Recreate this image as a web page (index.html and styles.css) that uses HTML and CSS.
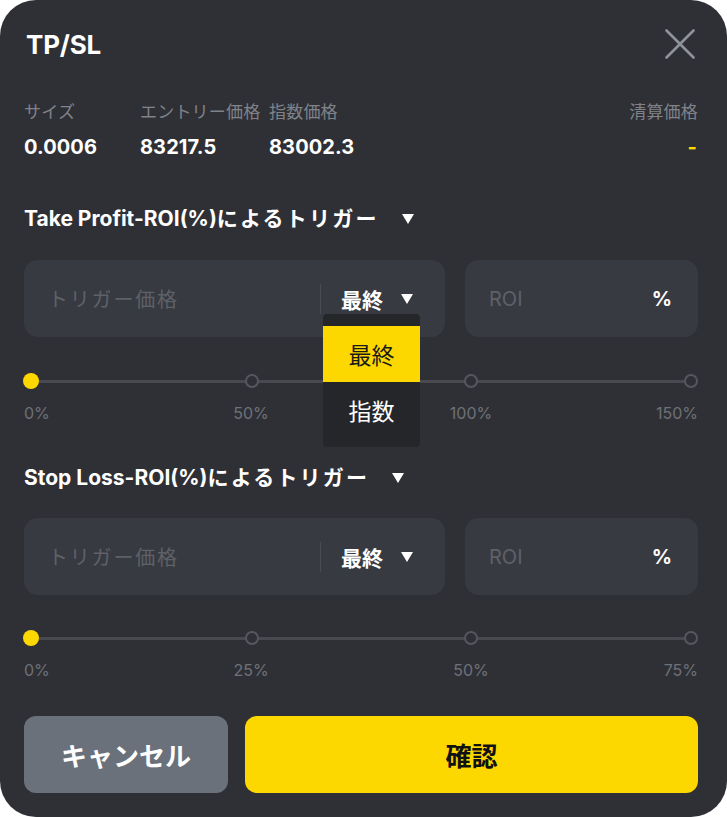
FILE: index.html
```html
<!DOCTYPE html>
<html lang="ja">
<head>
<meta charset="utf-8">
<title>TP/SL</title>
<link rel="stylesheet" href="styles.css">
</head>
<body>
<div class="modal">
  <div class="header">
    <div class="title">TP/SL</div>
    <svg class="close" width="30" height="30" viewBox="0 0 30 30"><path d="M1.5 1.5 L28.5 28.5 M28.5 1.5 L1.5 28.5" stroke="#8e939c" stroke-width="2.6" stroke-linecap="round" fill="none"/></svg>
  </div>

  <div class="info">
    <div class="lbl">サイズ</div>
    <div class="lbl">エントリー価格</div>
    <div class="lbl">指数価格</div>
    <div class="lbl right">清算価格</div>
    <div class="val">0.0006</div>
    <div class="val">83217.5</div>
    <div class="val">83002.3</div>
    <div class="val right yellow">-</div>
  </div>

  <div class="section-title first"><span>Take Profit-ROI(%)</span><span class="jp">によるトリガー</span><svg class="caret" width="12" height="10" viewBox="0 0 12 10"><path d="M0 0 H12 L6 10 Z" fill="#fff"/></svg></div>

  <div class="inputs">
    <div class="box price">
      <span class="ph grow">トリガー価格</span>
      <span class="divider"></span>
      <span class="sel">最終 <svg class="caret" width="12" height="10" viewBox="0 0 12 10"><path d="M0 0 H12 L6 10 Z" fill="#fff"/></svg></span>
      <div class="menu">
        <div class="item active">最終</div>
        <div class="item">指数</div>
      </div>
    </div>
    <div class="box">
      <span class="ph grow roi">ROI</span>
      <span class="pct">%</span>
    </div>
  </div>

  <div class="slider">
    <span class="dot on"></span><span class="dot"></span><span class="dot"></span><span class="dot"></span>
  </div>
  <div class="marks">
    <span class="m-left">0%</span><span class="m-mid">50%</span><span class="m-mid">100%</span><span class="m-right">150%</span>
  </div>

  <div class="section-title second"><span>Stop Loss-ROI(%)</span><span class="jp">によるトリガー</span><svg class="caret" width="12" height="10" viewBox="0 0 12 10"><path d="M0 0 H12 L6 10 Z" fill="#fff"/></svg></div>

  <div class="inputs second-in">
    <div class="box price">
      <span class="ph grow">トリガー価格</span>
      <span class="divider"></span>
      <span class="sel">最終 <svg class="caret" width="12" height="10" viewBox="0 0 12 10"><path d="M0 0 H12 L6 10 Z" fill="#fff"/></svg></span>
    </div>
    <div class="box">
      <span class="ph grow roi">ROI</span>
      <span class="pct">%</span>
    </div>
  </div>

  <div class="slider second-sl">
    <span class="dot on"></span><span class="dot"></span><span class="dot"></span><span class="dot"></span>
  </div>
  <div class="marks">
    <span class="m-left">0%</span><span class="m-mid">25%</span><span class="m-mid">50%</span><span class="m-right">75%</span>
  </div>

  <div class="buttons">
    <button class="btn cancel">キャンセル</button>
    <button class="btn confirm">確認</button>
  </div>
</div>
</body>
</html>
```
FILE: styles.css
```css
html, body {
  margin: 0;
  padding: 0;
  background: #ffffff;
}
body {
  font-family: "Inter", "Noto Sans CJK JP", sans-serif;
  color: #ffffff;
}
.modal {
  width: 727px;
  height: 817px;
  box-sizing: border-box;
  background: #2f3035;
  border-radius: 36px;
  padding: 24px 29px 0 24px;
  overflow: hidden;
}
.header {
  height: 40px;
  display: flex;
  align-items: center;
  justify-content: space-between;
}
.title {
  font-size: 26px;
  font-weight: 700;
  margin-left: 2px;
  letter-spacing: -0.2px;
}
.close {
  margin-right: 3px;
  display: block;
}
.info {
  margin-top: 36px;
  display: grid;
  grid-template-columns: 116px 129px 1fr auto;
  row-gap: 10px;
}
.lbl {
  font-size: 17px;
  line-height: 24px;
  color: #80838a;
  white-space: nowrap;
  letter-spacing: 0.2px;
}
.val {
  font-size: 20px;
  line-height: 26px;
  font-weight: 700;
  letter-spacing: 0.1px;
}
.right { text-align: right; }
.yellow { color: #fcd800; padding-right: 1px; }

.section-title {
  font-size: 21px;
  line-height: 30px;
  font-weight: 700;
  display: flex;
  align-items: center;
  white-space: nowrap;
}
.section-title .jp { letter-spacing: 2.2px; }
.section-title .caret { margin-left: 23px; }
.section-title.first { margin-top: 44px; }
.section-title.second { margin-top: 40px; }

.inputs {
  margin-top: 26px;
  display: grid;
  grid-template-columns: 421px 1fr;
  gap: 20px;
}
.inputs.second-in { margin-top: 25px; }
.box {
  height: 77px;
  background: #383a41;
  border-radius: 14px;
  display: flex;
  align-items: center;
  padding: 0 26px 0 24px;
  position: relative;
}
.box.price { padding-right: 32px; }
.grow { flex: 1; }
.ph {
  font-size: 20px;
  color: #5e6168;
  letter-spacing: 1.8px;
}
.ph.roi { letter-spacing: 0; }
.divider {
  width: 1px;
  height: 30px;
  background: #4a4c53;
  margin-right: 22px;
}
.sel {
  font-size: 21px;
  font-weight: 700;
  display: flex;
  align-items: center;
  margin-left: -2px;
}
.sel .caret { margin-left: 18px; }
.pct {
  font-size: 20px;
  font-weight: 700;
}
.menu {
  position: absolute;
  left: 299px;
  top: 54px;
  width: 97px;
  padding: 12px 0 9px;
  background: #25262a;
  border-radius: 4px;
  z-index: 5;
}
.item {
  height: 56px;
  display: flex;
  align-items: center;
  justify-content: center;
  font-size: 23px;
  color: #ffffff;
}
.item.active {
  background: #fcd800;
  color: #1a1a1a;
}

.slider {
  margin-top: 34px;
  margin-left: -1px;
  height: 20px;
  display: flex;
  align-items: center;
  justify-content: space-between;
  background: linear-gradient(#484a50, #484a50) center / calc(100% - 16px) 3px no-repeat;
}
.slider.second-sl { margin-top: 33px; }
.dot {
  width: 14px;
  height: 14px;
  box-sizing: border-box;
  border-radius: 50%;
  border: 2px solid #55575e;
  background: #2f3035;
}
.dot.on {
  width: 16px;
  height: 16px;
  border: none;
  background: #fcd800;
}
.marks {
  margin-top: 12px;
  display: grid;
  grid-template-columns: 1fr 220px 220px 1fr;
  font-size: 16px;
  line-height: 20px;
  color: #6e7178;
}
.m-mid { text-align: center; }
.m-right { text-align: right; }

.buttons {
  margin-top: 36px;
  display: grid;
  grid-template-columns: 204px 1fr;
  gap: 17px;
}
.btn {
  height: 77px;
  border: none;
  border-radius: 12px;
  font-family: "Inter", "Noto Sans CJK JP", sans-serif;
  font-size: 26px;
  font-weight: 700;
  padding: 0;
}
.cancel {
  background: #6b717b;
  color: #ffffff;
}
.confirm {
  background: #fcd800;
  color: #111111;
}
```
